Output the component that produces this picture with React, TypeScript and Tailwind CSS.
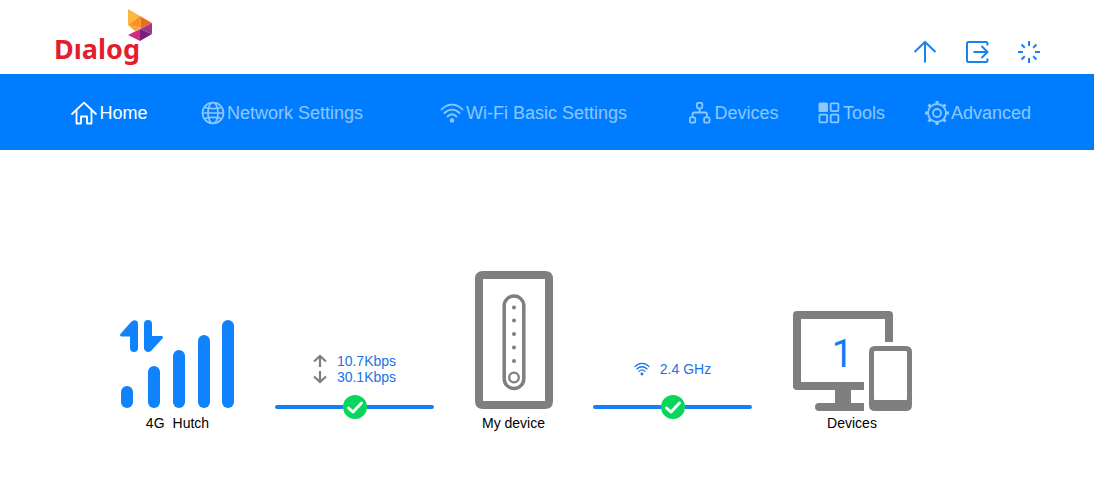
import type { ReactNode } from 'react'

function Logo() {
  return (
    <a href="#home" aria-label="Dialog" className="flex flex-col w-[99px] mt-[9px] no-underline">
      <svg viewBox="0 0 26 32" className="self-end w-[26px] h-8" aria-hidden="true">
        <path d="M1 0 13 7 1 16Z" fill="#fdb73e" />
        <path d="M13 7 25 14 14 19Z" fill="#ee6a24" />
        <path d="M13 7 14 19 1 16Z" fill="#f7931e" />
        <path d="M1 16 14 19 8 22Z" fill="#f9a13a" />
        <path d="M25 14 14 19 13 20Z" fill="#d8403a" />
        <path d="M1 26 13 20 13 32Z" fill="#d42a86" />
        <path d="M25 14V25L13 20Z" fill="#9c3a86" />
        <path d="M13 20 25 25 13 32Z" fill="#7a1f7c" />
      </svg>
      <span className="font-['Noto_Sans',sans-serif] font-bold text-[27px] leading-4 text-[#e31e2d]">Dıalog</span>
    </a>
  )
}

function ActionButton({ label, children }: { label: string; children: ReactNode }) {
  return (
    <button type="button" aria-label={label} className="w-6 h-6 text-[#1583f2]">
      <svg viewBox="0 0 24 24" className="w-6 h-6" fill="none" stroke="currentColor" strokeWidth="2">
        {children}
      </svg>
    </button>
  )
}

function NavItem({ label, active, children }: { label: string; active?: boolean; children: ReactNode }) {
  return (
    <a
      href="#"
      aria-current={active ? 'page' : undefined}
      className={`flex items-center justify-center gap-0.5 pt-0.5 whitespace-nowrap text-lg ${active ? 'text-white' : 'text-[#8cc8ff]'}`}
    >
      {children}
      {label}
    </a>
  )
}

function WifiArcs() {
  return (
    <>
      <path d="M1.500 8.500C7.500 2 16.500 2 22.500 8.500" />
      <path d="M4.500 12C9 7.500 15 7.500 19.500 12" />
      <path d="M7.500 15.500C10.500 12.500 13.500 12.500 16.500 15.500" />
      <circle cx="12" cy="19.500" r="2.200" fill="currentColor" stroke="none" />
    </>
  )
}

function HomeIcon() {
  return (
    <svg viewBox="0 0 26 24" className="w-[26px] h-6" fill="none" stroke="currentColor" strokeWidth="1.800" strokeLinejoin="round" strokeLinecap="round">
      <path d="M1 13 13 1.700 25 13" />
      <path d="M5.500 10V22.500H10V15.500H16V22.500H20.500V10" />
    </svg>
  )
}

function GlobeIcon() {
  return (
    <svg viewBox="0 0 24 24" className="w-6 h-6" fill="none" stroke="currentColor" strokeWidth="1.700">
      <circle cx="12" cy="12" r="10.500" />
      <ellipse cx="12" cy="12" rx="5" ry="10.500" />
      <path d="M1.500 12H22.500M3.500 6.200C8 8 16 8 20.500 6.200M3.500 17.800C8 16 16 16 20.500 17.800" />
    </svg>
  )
}

function WifiIcon() {
  return (
    <svg viewBox="0 0 24 24" className="w-6 h-6" fill="none" stroke="currentColor" strokeWidth="1.800" strokeLinecap="round">
      <WifiArcs />
    </svg>
  )
}

function TreeIcon() {
  return (
    <svg viewBox="0 0 24 24" className="w-6 h-6" fill="none" stroke="currentColor" strokeWidth="1.800">
      <rect x="8.900" y="1.900" width="5.400" height="5.400" rx="1.200" />
      <rect x="1.900" y="16.300" width="5.400" height="5.400" rx="1.200" />
      <rect x="16.100" y="16.300" width="5.400" height="5.400" rx="1.200" />
      <path d="M11.600 7.500V11.500M4.500 16V13.500Q4.500 11.500 6.500 11.500H17Q19 11.500 19 13.500V16" />
    </svg>
  )
}

function TilesIcon() {
  return (
    <svg viewBox="0 0 24 24" className="w-6 h-6" fill="none" stroke="currentColor" strokeWidth="1.800">
      <rect x="1.500" y="1.500" width="9.500" height="9.500" rx="1.500" fill="currentColor" stroke="none" />
      <rect x="13.700" y="2.400" width="7.700" height="7.700" rx="1" />
      <rect x="2.400" y="13.600" width="7.700" height="7.700" rx="1" />
      <rect x="13.700" y="13.600" width="7.700" height="7.700" rx="1" />
    </svg>
  )
}

function GearIcon() {
  return (
    <svg viewBox="0 0 24 24" className="w-6 h-6" fill="none" stroke="currentColor" strokeWidth="1.800">
      <circle cx="12" cy="12" r="9" />
      <circle cx="12" cy="12" r="4" />
      <path
        d="M12 0V3M12 21V24M0 12H3M21 12H24M3.500 3.500 5.600 5.600M18.400 18.400 20.500 20.500M3.500 20.500 5.600 18.400M18.400 5.600 20.500 3.500"
        strokeWidth="3"
      />
    </svg>
  )
}

function SignalBars() {
  return (
    <svg viewBox="0 0 115 89" className="w-[115px] h-[89px]" fill="#0f82fc" aria-hidden="true">
      <path d="M11 2Q14 -1 17 1Q18 2 18 4V28Q18 32 14 32Q10 32 10 28V16.500H1.500Q-1 16 .8 13.500Z" />
      <path d="M32 16H42Q44 16.500 42 19L31 31Q28 33 25.500 31Q24 30 24 28V4Q24 0 28 0Q32 0 32 4Z" />
      <rect x="1" y="66" width="12" height="22" rx="6" />
      <rect x="28" y="46" width="12" height="42" rx="6" />
      <rect x="53" y="30" width="12" height="58" rx="6" />
      <rect x="78" y="15" width="12" height="73" rx="6" />
      <rect x="102" y="0" width="12" height="88" rx="6" />
    </svg>
  )
}

function RouterDrawing() {
  return (
    <svg viewBox="0 0 78 138" className="w-[78px] h-[138px]" fill="none" stroke="#7f7f7f" aria-hidden="true">
      <path d="M8 0H70Q78 0 78 8V130Q78 138 70 138H8Q0 138 0 130V8Q0 0 8 0ZM8 8V130H70V8Z" fill="#7f7f7f" fillRule="evenodd" stroke="none" />
      <rect x="29.200" y="25" width="19.600" height="92.500" rx="9.800" strokeWidth="3.500" />
      {[36.5, 49.5, 63, 76.5, 90].map((y) => (
        <circle key={y} cx="39" cy={y} r="2" fill="#7f7f7f" stroke="none" />
      ))}
      <circle cx="39" cy="106.500" r="4.800" strokeWidth="2.300" />
    </svg>
  )
}

function ClientsDrawing() {
  return (
    <svg viewBox="0 0 119 100" className="w-[119px] h-[100px]" fill="#7f7f7f" aria-hidden="true">
      <path d="M4 0H96Q100 0 100 4V31H92V8H8V71H71V79H58V92H71V100H26Q22 100 22 96Q22 92 26 92H42V79H4Q0 79 0 75V4Q0 0 4 0Z" />
      <path d="M82 35H113Q119 35 119 41V94Q119 100 113 100H82Q76 100 76 94V41Q76 35 82 35ZM82 40Q81 40 81 41V88Q81 89 82 89H113Q114 89 114 88V41Q114 40 113 40Z" fillRule="evenodd" />
    </svg>
  )
}

function Link({ children }: { children: ReactNode }) {
  return (
    <div className="flex flex-col items-center gap-2.5 mb-3.5">
      <div className="flex flex-col justify-center h-8 text-sm leading-4 text-[#1a73e8]">{children}</div>
      <div className="flex items-center w-full">
        <span className="flex-1 h-1 rounded-l-full bg-[#1380f5]" />
        <svg viewBox="0 0 24 24" className="w-6 h-6" fill="none" role="img" aria-label="Connected">
          <circle cx="12" cy="12" r="12" fill="#07d65b" />
          <path d="M5.500 13 10 17 18.500 8" stroke="#fff" strokeWidth="3" strokeLinecap="round" strokeLinejoin="round" />
        </svg>
        <span className="flex-1 h-1 rounded-r-full bg-[#1380f5]" />
      </div>
    </div>
  )
}

function Rate({ value, down }: { value: string; down?: boolean }) {
  return (
    <div className="flex items-center gap-2.5">
      <svg viewBox="0 0 14 14" className="w-3.5 h-3.5" fill="none" stroke="#7f7f7f" strokeWidth="2.200" aria-label={down ? 'Download' : 'Upload'}>
        {down ? <path d="M7 1V12M1 6.500 7 12 13 6.500" /> : <path d="M7 13V2M1 7.500 7 2 13 7.500" />}
      </svg>
      {value}
    </div>
  )
}

export default function App() {
  return (
    <div className="min-h-screen bg-white font-['Liberation_Sans',Arial,sans-serif]">
      <header className="flex justify-between items-start h-[74px] pl-[54px] pr-[53px]">
        <Logo />
        <div className="flex gap-7 mt-10">
          <ActionButton label="Update">
            <path d="M12 22.500V2M1.500 12 12 2 22.500 12" />
          </ActionButton>
          <ActionButton label="Log out">
            <path d="M22.500 5.500V3.500Q22.500 2 21 2H3.500Q2 2 2 3.500V20.500Q2 22 3.500 22H21Q22.500 22 22.500 20.500V18.500" />
            <path d="M8.500 12H22M16.500 6 22.500 12 16.500 18" />
          </ActionButton>
          <ActionButton label="Reboot">
            <path d="M12 1V6M12 18V23M1 12H6M18 12H23M4.500 4.500 7.800 7.800M16.200 16.200 19.500 19.500M4.500 19.500 7.800 16.200M16.200 7.800 19.500 4.500" />
          </ActionButton>
        </div>
      </header>

      <nav className="grid grid-cols-[111fr_234fr_269fr_131fr_104fr_150fr] h-[76px] pl-[54px] pr-[41px] bg-[#007dff]">
        <NavItem label="Home" active>
          <HomeIcon />
        </NavItem>
        <NavItem label="Network Settings">
          <GlobeIcon />
        </NavItem>
        <NavItem label="Wi-Fi Basic Settings">
          <WifiIcon />
        </NavItem>
        <NavItem label="Devices">
          <TreeIcon />
        </NavItem>
        <NavItem label="Tools">
          <TilesIcon />
        </NavItem>
        <NavItem label="Advanced">
          <GearIcon />
        </NavItem>
      </nav>

      <main className="grid grid-cols-[195fr_159fr_159fr_159fr_200fr] items-end pt-[121px] pl-20 pr-[142px] text-sm text-black">
        <section className="flex flex-col items-center gap-1">
          <SignalBars />
          <p className="flex gap-2">
            <span>4G</span>
            <span>Hutch</span>
          </p>
        </section>

        <Link>
          <Rate value="10.7Kbps" />
          <Rate value="30.1Kbps" down />
        </Link>

        <section className="flex flex-col items-center gap-1">
          <RouterDrawing />
          <p>My device</p>
        </section>

        <Link>
          <div className="flex items-center gap-2.5">
            <svg viewBox="0 0 24 24" className="w-4 h-4" fill="none" stroke="currentColor" strokeWidth="1.900" strokeLinecap="round" aria-label="Wi-Fi">
              <WifiArcs />
            </svg>
            2.4 GHz
          </div>
        </Link>

        <section className="flex flex-col items-center gap-0.5">
          <div className="relative">
            <ClientsDrawing />
            <span className="absolute left-2 top-3 w-[84px] h-[63px] flex items-center justify-center font-['Roboto',sans-serif] text-[38px] text-[#0f7dfa]">1</span>
          </div>
          <p>Devices</p>
        </section>
      </main>
    </div>
  )
}
